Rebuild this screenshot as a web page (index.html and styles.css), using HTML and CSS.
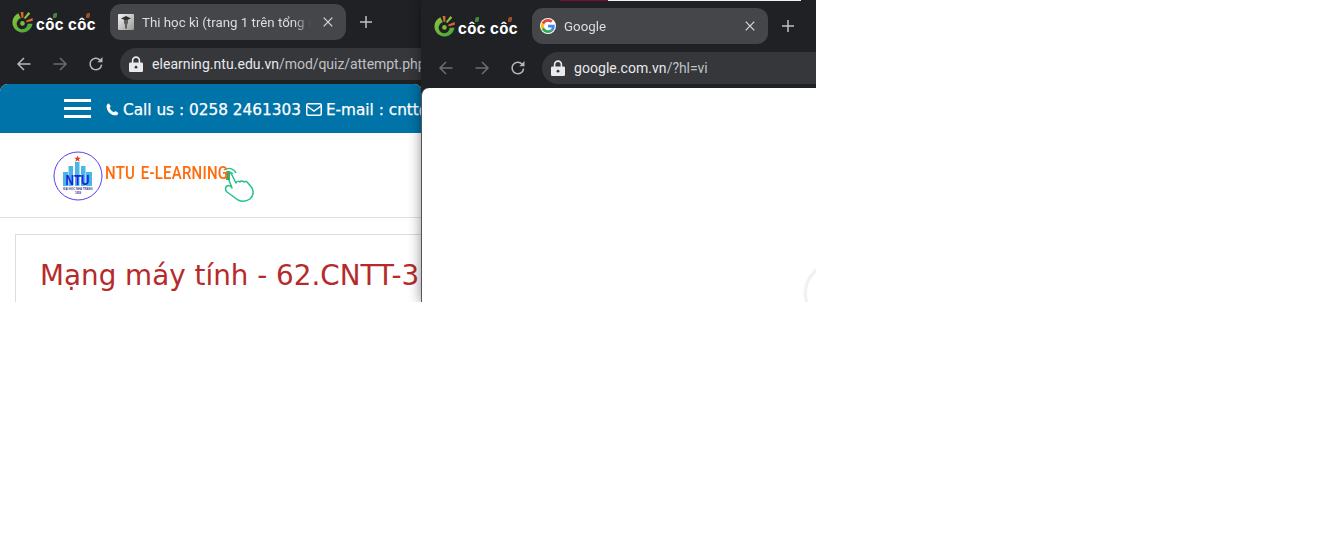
FILE: index.html
```html
<!DOCTYPE html>
<html lang="vi">
<head>
<meta charset="utf-8">
<title>Browsers</title>
<link rel="stylesheet" href="styles.css">
</head>
<body>
<div class="desktop">
  <section class="win win-a">
    <div class="strip">
      <div class="brand">
        <svg class="brand-mark" viewBox="0 0 24 24" width="22" height="22"><defs><linearGradient id="cc1" x1="0" y1="0" x2="1" y2="1"><stop offset="0" stop-color="#8cc63f"/><stop offset="1" stop-color="#3fa535"/></linearGradient></defs><path d="M8 2.500A11 11 0 1 0 23.500 14h-5.300a6 6 0 1 1-7.500-6z" fill="url(#cc1)"/><path d="M10.500 1l1 6.500 2-.4L13.500 1z" fill="#e0682c"/><path d="M19 1l-5 6.500 1.600 1.200 5.400-5.700z" fill="#8cc63f"/><path d="M23.500 7.500l-7 3 .6 1.800 6.700-1.800z" fill="#e2672a"/><circle cx="12.500" cy="13.500" r="2.500" fill="#7dbb39"/></svg>
        <span class="brand-name">côc côc</span>
        <i class="leaf leaf-1"></i><i class="leaf leaf-2"></i>
      </div>
      <div class="tab">
        <span class="favicon-quiz"><svg viewBox="0 0 16 16" width="16" height="16"><defs><linearGradient id="fq" x1="0" y1="0" x2="1" y2="1"><stop offset="0" stop-color="#f2f2f2"/><stop offset="1" stop-color="#9a9a9a"/></linearGradient></defs><rect width="16" height="16" rx="1" fill="url(#fq)"/><path d="M3 4.500l5-2.500 5 2.500-5 2z" fill="#2d2d2d"/><path d="M6 6h4v3l-1 2v3.500H7V11L6 9z" fill="#5e5e5e"/></svg></span>
        <span class="tab-title">Thi học kì (trang 1 trên tổng số</span>
        <svg class="tab-close" viewBox="0 0 10 10" width="10" height="10"><path d="M.7.7l8.600 8.600M9.300.7L.7 9.300" stroke="#dadce0" stroke-width="1.200"/></svg>
      </div>
      <svg class="plus" viewBox="0 0 12 12" width="12" height="12"><path d="M6 0v12M0 6h12" stroke="#bdc1c6" stroke-width="1.500"/></svg>
    </div>
    <div class="toolbar">
      <svg class="nav nav-on" viewBox="0 0 16 16" width="16" height="16"><path d="M14.500 8H2M8 2L2 8l6 6" fill="none" stroke="#b5b8bc" stroke-width="1.500"/></svg>
      <svg class="nav nav-off" viewBox="0 0 16 16" width="16" height="16"><path d="M1.500 8H14M8 2l6 6-6 6" fill="none" stroke="#6b6d70" stroke-width="1.500"/></svg>
      <svg class="nav nav-reload" viewBox="0 0 16 16" width="16" height="16"><path d="M13.600 8.600A5.800 5.800 0 1 1 12 3.900" fill="none" stroke="#b5b8bc" stroke-width="1.500"/><path d="M14.500 1v5.200H9.300z" fill="#b5b8bc"/></svg>
      <div class="omnibox">
        <svg class="lock" viewBox="0 0 14 16" width="14" height="16"><path d="M3.600 7V4.500a3.400 3.400 0 0 1 6.800 0V7" fill="none" stroke="#e8eaed" stroke-width="1.600"/><rect x="0" y="6.500" width="14" height="9.500" rx="1.300" fill="#e8eaed"/><circle cx="7" cy="11.200" r="1.400" fill="#35363a"/></svg>
        <span class="url"><b>elearning.ntu.edu.vn</b>/mod/quiz/attempt.php?attempt=1</span>
      </div>
    </div>
    <div class="page">
      <div class="topbar">
        <div class="burger"><i></i><i></i><i></i></div>
        <svg class="phone" viewBox="0 0 14 14" width="13" height="13"><path d="M3.200.6l2 3.200-1.300 1.500c.8 2 2.500 3.700 4.700 4.700l1.500-1.300 3.200 2c-.3 1.500-1.400 2.600-2.800 2.600C5 13.300.7 9 .6 3.500.6 2 1.700.9 3.200.6z" fill="#fff"/></svg>
        <span class="contact">Call us : 0258 2461303</span>
        <svg class="mail" viewBox="0 0 16 13" width="16" height="13"><rect x=".75" y=".75" width="14.500" height="11.500" rx="1.500" fill="none" stroke="#fff" stroke-width="1.500"/><path d="M1 3l7 5 7-5" fill="none" stroke="#fff" stroke-width="1.500"/></svg>
        <span class="contact">E-mail : cntt@ntu.edu.vn</span>
      </div>
      <div class="logo-row">
        <svg class="crest" viewBox="0 0 50 50" width="50" height="50"><circle cx="25" cy="25" r="24" fill="#fff" stroke="#5b3df0" stroke-width="1"/><path d="M24.500 4.500l.9 2.300h2.400l-1.900 1.500.7 2.400-2.100-1.400-2.100 1.400.7-2.400-1.900-1.500h2.400z" fill="#e33b2e"/><path d="M10 21h5v14h-5zM15.500 15H20v20h-4.500zM22 11h4.500v24H22zM28 15h4.500v20H28zM33 21h6v14h-6z" fill="#4bb6e6"/><text x="24.500" y="34" textLength="24" lengthAdjust="spacingAndGlyphs" class="crest-ntu">NTU</text><text x="25" y="38.800" class="crest-sub">ĐẠI HỌC NHA TRANG</text><text x="25" y="43" class="crest-sub">1959</text></svg>
        <span class="logo-text">NTU E-LEARNING</span>
        <svg class="hand" viewBox="0 0 30 30" width="30" height="30"><path d="M3 5c0-3 4-3 5 0l4 8c.5-2 3-2 4-1 1-1.500 3-1 4 0 1-1 3-.5 4 1l4 5c2 4 1 8-2 11-3 2-8 3-12 1L3 22c-2-2-2-5 0-6 2-1 4 0 5 2z" fill="#fff" stroke="#22c08e" stroke-width="1.500" stroke-linejoin="round"/><rect x="2" y="2" width="4" height="8" fill="#45a860"/><path d="M1 3a5 5 0 0 1 8 1M0 0a8 8 0 0 1 12 3" fill="none" stroke="#22c08e" stroke-width="1.200"/></svg>
      </div>
      <div class="content">
        <div class="card"><h1 class="course">Mạng máy tính - 62.CNTT-3</h1></div>
      </div>
    </div>
  </section>

  <section class="win win-b">
    <div class="accent"><i class="accent-red"></i><i class="accent-white"></i></div>
    <div class="strip">
      <div class="brand">
        <svg class="brand-mark" viewBox="0 0 24 24" width="22" height="22"><path d="M8 2.500A11 11 0 1 0 23.500 14h-5.300a6 6 0 1 1-7.500-6z" fill="url(#cc1)"/><path d="M10.500 1l1 6.500 2-.4L13.500 1z" fill="#e0682c"/><path d="M19 1l-5 6.500 1.600 1.200 5.400-5.700z" fill="#8cc63f"/><path d="M23.500 7.500l-7 3 .6 1.800 6.700-1.800z" fill="#e2672a"/><circle cx="12.500" cy="13.500" r="2.500" fill="#7dbb39"/></svg>
        <span class="brand-name">côc côc</span>
        <i class="leaf leaf-1"></i><i class="leaf leaf-2"></i>
      </div>
      <div class="tab">
        <span class="favicon-g"><svg viewBox="0 0 48 48" width="14" height="14"><path fill="#EA4335" d="M24 9.500c3.500 0 6.700 1.300 9.100 3.500l6.800-6.800C35.800 2.400 30.300 0 24 0 14.600 0 6.500 5.400 2.600 13.200l7.900 6.200C12.400 13.700 17.700 9.500 24 9.500z"/><path fill="#4285F4" d="M47 24.500c0-1.600-.1-3.100-.4-4.500H24v9h12.900c-.6 3-2.200 5.500-4.700 7.200l7.700 6C44.400 37.500 47 31.600 47 24.500z"/><path fill="#FBBC05" d="M10.500 28.600c-.5-1.400-.8-3-.8-4.600s.3-3.200.8-4.600l-7.900-6.200C.9 16.500 0 20.100 0 24s.9 7.500 2.600 10.800z"/><path fill="#34A853" d="M24 48c6.500 0 11.900-2.100 15.900-5.800l-7.700-6c-2.200 1.400-4.900 2.300-8.200 2.300-6.300 0-11.600-4.200-13.500-9.900l-7.900 6.200C6.500 42.600 14.600 48 24 48z"/></svg></span>
        <span class="tab-title">Google</span>
        <svg class="tab-close" viewBox="0 0 10 10" width="10" height="10"><path d="M.7.7l8.600 8.600M9.300.7L.7 9.300" stroke="#dadce0" stroke-width="1.200"/></svg>
      </div>
      <svg class="plus" viewBox="0 0 12 12" width="12" height="12"><path d="M6 0v12M0 6h12" stroke="#bdc1c6" stroke-width="1.500"/></svg>
    </div>
    <div class="toolbar">
      <svg class="nav nav-on" viewBox="0 0 16 16" width="16" height="16"><path d="M14.500 8H2M8 2L2 8l6 6" fill="none" stroke="#6b6d70" stroke-width="1.500"/></svg>
      <svg class="nav nav-off" viewBox="0 0 16 16" width="16" height="16"><path d="M1.500 8H14M8 2l6 6-6 6" fill="none" stroke="#6b6d70" stroke-width="1.500"/></svg>
      <svg class="nav nav-reload" viewBox="0 0 16 16" width="16" height="16"><path d="M13.600 8.600A5.800 5.800 0 1 1 12 3.900" fill="none" stroke="#b5b8bc" stroke-width="1.500"/><path d="M14.500 1v5.200H9.300z" fill="#b5b8bc"/></svg>
      <div class="omnibox">
        <svg class="lock" viewBox="0 0 14 16" width="14" height="16"><path d="M3.600 7V4.500a3.400 3.400 0 0 1 6.800 0V7" fill="none" stroke="#e8eaed" stroke-width="1.600"/><rect x="0" y="6.500" width="14" height="9.500" rx="1.300" fill="#e8eaed"/><circle cx="7" cy="11.200" r="1.400" fill="#35363a"/></svg>
        <span class="url"><b>google.com.vn</b>/?hl=vi</span>
      </div>
    </div>
    <div class="page page-google"><div class="spinner"></div></div>
  </section>
</div>
</body>
</html>
```
FILE: styles.css
```css
* { box-sizing: border-box; }
html, body { margin: 0; background: #fff; }
.desktop { position: relative; width: 1338px; height: 548px; overflow: hidden; }

.win { position: absolute; top: 0; height: 302px; background: #202124; display: flex; flex-direction: column; overflow: hidden; font-family: "Roboto", "Liberation Sans", sans-serif; }
.win-a { left: 0; width: 422px; }
.win-b { left: 421px; width: 425px; z-index: 1; padding-top: 4px; overflow: visible; box-shadow: 0 0 12px rgba(0,0,0,.45); clip-path: inset(0 30px 0 -14px); }
.win-a .strip { height: 44px; padding-top: 4px; }
.win-b .strip { height: 44px; padding: 4px 0 0 12px; }
.win-b .toolbar { padding-left: 17px; }

.accent { position: absolute; top: 0; left: 139px; height: 1px; display: flex; }
.accent-red { width: 48px; background: #7d0b31; }
.accent-white { width: 193px; background: #f0f0f0; }

.strip { display: flex; align-items: flex-start; padding-left: 11px; flex: none; }
.brand { position: relative; width: 99px; height: 36px; display: flex; align-items: center; gap: 3px; flex: none; }
.brand-mark { flex: none; }
.brand-name { font-family: "Inter", "Liberation Sans", sans-serif; font-weight: 700; font-size: 15px; letter-spacing: .4px; color: #fff; line-height: 20px; margin-top: 5px; white-space: nowrap; }
.leaf { position: absolute; top: 9px; width: 4px; height: 5px; border-radius: 50% 0; }
.leaf-1 { left: 42px; background: #3e8a3a; }
.leaf-2 { left: 75px; background: #9a4f2c; }

.tab { width: 236px; height: 36px; border-radius: 11px; background: #45464a; display: flex; align-items: center; padding: 0 13px 0 8px; flex: none; }
.favicon-quiz { width: 16px; height: 16px; display: flex; flex: none; }
.favicon-g { width: 16px; height: 16px; border-radius: 50%; background: #fff; display: flex; align-items: center; justify-content: center; flex: none; }
.tab-title { margin-left: 8px; flex: 1; min-width: 0; overflow: hidden; white-space: nowrap; font-size: 13.300px; color: #dcdde0; -webkit-mask-image: linear-gradient(90deg, #000 90%, transparent 100%); mask-image: linear-gradient(90deg, #000 90%, transparent 100%); }
.tab-close { margin-left: 12px; flex: none; }
.plus { margin: 12px 0 0 14px; flex: none; }

.toolbar { height: 40px; display: flex; align-items: center; padding-left: 16px; flex: none; }
.nav { flex: none; }
.nav-off { margin-left: 20px; }
.nav-reload { margin-left: 20px; }
.omnibox { margin-left: 16px; width: 700px; height: 32px; border-radius: 16px; background: #36373b; display: flex; align-items: center; padding-left: 9px; flex: none; }
.url { margin-left: 9px; font-size: 14px; color: #bfc2c6; white-space: nowrap; letter-spacing: -.05px; }
.url b { font-weight: 400; color: #e8eaed; letter-spacing: .05px; }

.page { flex: 1; background: #fff; border-radius: 8px 8px 0 0; overflow: hidden; display: flex; flex-direction: column; min-height: 0; }
.win-b .page { border-left: 1px solid #555; position: relative; }

.topbar { height: 49px; background: #0073a8; display: flex; align-items: center; padding-left: 64px; color: #fff; flex: none; white-space: nowrap; }
.burger { width: 27px; display: flex; flex-direction: column; gap: 5px; margin-right: 15px; flex: none; }
.burger i { display: block; height: 3px; background: #fff; }
.contact { font-family: "DejaVu Sans", "Open Sans", sans-serif; font-size: 15.300px; margin: 3px 0 0 4px; -webkit-text-stroke: .25px #fff; }
.mail { margin: 2px 0 0 5px; flex: none; }
.phone { flex: none; margin-top: 1px; }

.logo-row { height: 85px; border-bottom: 1px solid #e0e0e0; display: flex; align-items: flex-start; padding: 17px 0 0 53px; flex: none; background: #fff; }
.crest { width: 50px; height: 50px; flex: none; overflow: visible; margin-top: 1px; }
.crest-ntu { font: 700 14px "Liberation Sans", sans-serif; fill: #1a22e0; text-anchor: middle; }
.crest-sub { font: 700 2.800px "Liberation Sans", sans-serif; fill: #3a3a8a; text-anchor: middle; }
.logo-text { display: block; width: 150px; font-family: "Roboto", sans-serif; font-weight: 500; font-size: 18.500px; letter-spacing: .3px; word-spacing: 2px; color: #ff6a0a; margin: 13px 0 0 2px; line-height: 20px; white-space: nowrap; flex: none; transform: scaleX(.81); transform-origin: left center; }
.hand { margin: 20px 0 0 -31px; flex: none; overflow: visible; }

.content { padding: 16px 0 0 15px; flex: 1; min-height: 0; }
.card { width: 500px; height: 120px; border: 1px solid #ddd; padding: 25px 0 0 24px; }
.course { margin: 0; font-family: "DejaVu Sans", sans-serif; font-weight: 400; font-size: 27.800px; line-height: 32px; color: #b52b2b; white-space: nowrap; }

.spinner { position: absolute; left: 382px; top: 175px; width: 60px; height: 60px; border-radius: 50%; border: 3px solid #f1f1f1; box-shadow: 0 0 2px rgba(0,0,0,.08); }
```
